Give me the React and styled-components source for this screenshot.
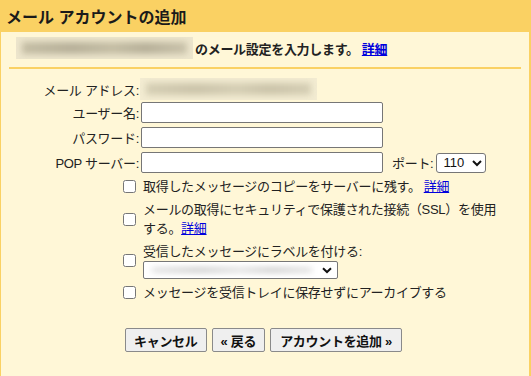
import React from "react";
import styled, { createGlobalStyle } from "styled-components";

const Global = createGlobalStyle`
  html, body { margin: 0; padding: 0; background: #fff7d7; }
  body {
    font-family: "Liberation Sans", "Noto Sans CJK JP", sans-serif;
    font-size: 13px;
    letter-spacing: -0.3px;
    color: #222;
  }
  * { box-sizing: border-box; }
`;

const Page = styled.div`
  width: 531px;
  height: 376px;
  display: flex;
  flex-direction: column;
  overflow: hidden;
`;

const Header = styled.div`
  height: 32px;
  flex: none;
  background: #fad163;
  display: flex;
  align-items: center;
  padding-left: 6px;
  font-size: 16px;
  font-weight: bold;
  letter-spacing: 0;
  color: #1a1a1a;
`;

const Body = styled.div`
  flex: 1;
  background: #fff7d7;
  border-left: 1px solid #fad163;
  border-right: 2px solid #fad163;
  display: flex;
  flex-direction: column;
`;

const Intro = styled.div`
  display: flex;
  align-items: center;
  padding: 5px 0 0 15px;
  height: 27px;
  font-weight: bold;
  gap: 2px;
`;

const Link = styled.a`
  color: #0000dd;
  text-decoration: underline;
  cursor: pointer;
  margin-left: ${(p) => p.$gap || 0}px;
`;

const Blur = styled.span`
  display: inline-block;
  position: relative;
  overflow: hidden;
  width: ${(p) => p.$w}px;
  height: ${(p) => p.$h}px;
  background: ${(p) => p.$bg || "#ece5cc"};
  flex: none;
  &::after {
    content: "";
    position: absolute;
    inset: 5px 6px;
    background: linear-gradient(
      90deg,
      ${(p) => p.$ink || "#c4bda4"} 0%,
      ${(p) => p.$ink2 || "#b7b099"} 30%,
      ${(p) => p.$ink || "#c4bda4"} 55%,
      ${(p) => p.$ink2 || "#b7b099"} 75%,
      ${(p) => p.$ink || "#c9c2aa"} 100%
    );
    filter: blur(3px);
  }
`;

const Separator = styled.div`
  height: 2px;
  margin: 8px 8px 0 8px;
  background: #fad163;
  flex: none;
`;

const Form = styled.div`
  padding-top: 9px;
  display: flex;
  flex-direction: column;
`;

const Row = styled.div`
  display: flex;
  align-items: center;
  height: ${(p) => p.$h || 21}px;
  margin-bottom: ${(p) => p.$mb ?? 4}px;
`;

const Label = styled.label`
  width: 139px;
  padding-right: 1px;
  flex: none;
  text-align: right;
  white-space: nowrap;
`;

const TextInput = styled.input`
  width: 242px;
  height: 21px;
  border: 1px solid #767676;
  border-radius: 2px;
  background: #fff;
  padding: 1px 3px;
  font: inherit;
  margin: 0 0 0 1px;
`;

const PortLabel = styled.label`
  margin-left: 9px;
  margin-right: 3px;
  white-space: nowrap;
`;

const Select = styled.select`
  width: ${(p) => p.$w}px;
  height: ${(p) => p.$h || 20}px;
  border: 1px solid #767676;
  border-radius: 3px;
  background: #fff;
  font-family: "Liberation Sans", sans-serif;
  font-size: 13px;
  color: #111;
  margin: 0;
  padding: 0 2px;
`;

const Options = styled.div`
  display: flex;
  flex-direction: column;
  gap: 4px;
  padding-left: 122px;
`;

const OptionRow = styled.div`
  display: flex;
  align-items: center;
  gap: 7px;
`;

const Check = styled.input.attrs({ type: "checkbox" })`
  width: 13px;
  height: 13px;
  margin: 0;
  flex: none;
`;

const OptionText = styled.div`
  line-height: 19px;
  white-space: nowrap;
`;

const LabelPicker = styled.div`
  width: 195px;
  height: 18px;
  border: 1px solid #767676;
  border-radius: 2px;
  background: #fff;
  display: flex;
  align-items: center;
  padding: 0 5px 0 2px;
  justify-content: space-between;
`;

const Buttons = styled.div`
  display: flex;
  gap: 5px;
  margin-top: 26px;
  padding-left: 124px;
`;

const Button = styled.button`
  height: 24px;
  padding: 0 ${(p) => p.$px || 9}px;
  border: 1px solid #8a8a8a;
  border-radius: 2px;
  background: #efefef;
  font-family: "Liberation Sans", "Noto Sans CJK JP", sans-serif;
  font-size: 13px;
  font-weight: bold;
  letter-spacing: -0.3px;
  color: #111;
  cursor: pointer;
  white-space: nowrap;
`;

const Chevron = () => (
  <svg width="10" height="7" viewBox="0 0 10 7" aria-hidden="true">
    <path d="M1 1.2 L5 5 L9 1.2" fill="none" stroke="#111" strokeWidth="2" />
  </svg>
);

export default function App() {
  return (
    <>
      <Global />
      <Page>
        <Header>メール アカウントの追加</Header>
        <Body>
          <Intro>
            <Blur $w={177} $h={22} $bg="#ede6cd" />
            <span>のメール設定を入力します。</span>
            <Link $gap={1}>詳細</Link>
          </Intro>
          <Separator />
          <Form>
            <Row $h={22} $mb={2}>
              <Label>メール アドレス:</Label>
              <Blur $w={177} $h={22} $bg="#f3ecd2" $ink="#d5ceb4" $ink2="#cbc4aa" />
            </Row>
            <Row>
              <Label>ユーザー名:</Label>
              <TextInput type="text" />
            </Row>
            <Row>
              <Label>パスワード:</Label>
              <TextInput type="password" />
            </Row>
            <Row>
              <Label>POP サーバー:</Label>
              <TextInput type="text" />
              <PortLabel>ポート:</PortLabel>
              <Select $w={50} $h={20} defaultValue="110">
                <option value="110">110</option>
                <option value="995">995</option>
              </Select>
            </Row>
          </Form>
          <Options>
            <OptionRow>
              <Check />
              <OptionText>
                取得したメッセージのコピーをサーバーに残す。<Link $gap={3}>詳細</Link>
              </OptionText>
            </OptionRow>
            <OptionRow>
              <Check />
              <OptionText>
                メールの取得にセキュリティで保護された接続（SSL）を使用
                <br />
                する。<Link>詳細</Link>
              </OptionText>
            </OptionRow>
            <OptionRow>
              <Check />
              <div>
                <OptionText>受信したメッセージにラベルを付ける:</OptionText>
                <LabelPicker>
                  <Blur $w={172} $h={14} $bg="#fff" $ink="#d6d6d6" $ink2="#b9b9b9" />
                  <Chevron />
                </LabelPicker>
              </div>
            </OptionRow>
            <OptionRow>
              <Check />
              <OptionText>メッセージを受信トレイに保存せずにアーカイブする</OptionText>
            </OptionRow>
          </Options>
          <Buttons>
            <Button $px={8}>キャンセル</Button>
            <Button $px={8}>« 戻る</Button>
            <Button $px={9}>アカウントを追加 »</Button>
          </Buttons>
        </Body>
      </Page>
    </>
  );
}
